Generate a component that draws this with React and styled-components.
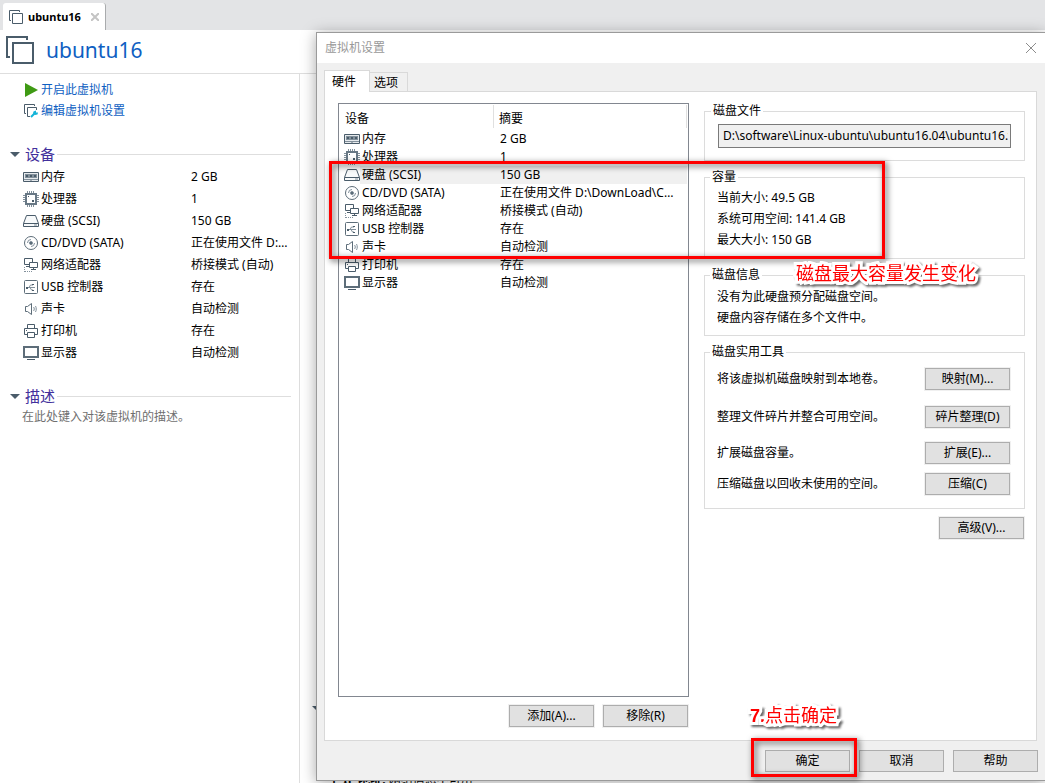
import styled, { createGlobalStyle } from "styled-components";

const GlobalStyle = createGlobalStyle`
  * {
    box-sizing: border-box;
  }
  body {
    margin: 0;
    background-color: white;
    font-family: "Noto Sans", "Noto Sans CJK SC", sans-serif;
    font-size: 12px;
    line-height: 16px;
    color: black;
  }
  button, input {
    font: inherit;
    color: inherit;
  }
`;

const Page = styled.div`
  position: relative;
  min-height: 100vh;
  display: flex;
  flex-direction: column;
  overflow: hidden;
`;

const TabBar = styled.div`
  height: 30px;
  padding: 3px 3px 0;
  display: flex;
  background-color: #e3e4e6;
`;

const VmTab = styled.div`
  padding: 0 6px;
  display: flex;
  align-items: center;
  gap: 5px;
  background-color: white;
  border-right: 1px solid #a9abad;
  border-radius: 3px 3px 0 0;
  font-weight: bold;
  font-size: 11px;
`;

const PlainButton = styled.button`
  padding: 0;
  border: 0;
  background: none;
  display: flex;
  align-items: center;
  cursor: pointer;
`;

const TabClose = styled(PlainButton)`
  margin-left: 5px;
`;

const Header = styled.header`
  height: 44px;
  padding: 0 6px 4px;
  display: flex;
  align-items: center;
  gap: 12px;
  border-bottom: 1px solid #dedede;
`;

const VmTitle = styled.h1`
  margin: 0;
  font-size: 21px;
  line-height: 28px;
  font-weight: normal;
  color: #0f5fc2;
`;

const Body = styled.div`
  flex: 1;
  display: flex;
`;

const Sidebar = styled.aside`
  width: 300px;
  padding: 5px 8px 0 10px;
  border-right: 1px solid #dedede;
`;

const Actions = styled.nav`
  padding-left: 13px;
  display: flex;
  flex-direction: column;
`;

const Action = styled.a`
  height: 21px;
  display: flex;
  align-items: center;
  gap: 2px;
  color: #0f5fc2;
  text-decoration: none;
`;

const Section = styled.section`
  margin-top: 22px;
`;

const SectionHead = styled.div`
  height: 22px;
  display: flex;
  align-items: center;
  gap: 2px;
  &::after {
    content: "";
    flex: 1;
    border-top: 1px solid #dedede;
  }
`;

const SectionTitle = styled(PlainButton)`
  gap: 5px;
  font-size: 15px;
  line-height: 22px;
  color: #42309c;
`;

const Description = styled.p`
  margin: 2px 0 0 12px;
  color: #6f6f6f;
`;

const DeviceTable = styled.table`
  width: 100%;
  table-layout: fixed;
  border-collapse: collapse;
  th, td {
    padding: 0;
    font-weight: normal;
    text-align: left;
    white-space: nowrap;
  }
`;

const SideRow = styled.tr`
  height: 22px;
  th {
    width: 181px;
  }
  && > * {
    padding-top: 1px;
  }
`;

const DeviceName = styled.span`
  padding-left: ${(props) => props.$indent}px;
  display: flex;
  align-items: center;
  gap: 2px;
`;

const Ellipsis = styled.div`
  overflow: hidden;
  text-overflow: ellipsis;
`;

const Summary = styled.main`
  flex: 1;
  padding: 0 12px;
  display: flex;
  flex-direction: column;
  justify-content: space-between;
`;

const SummaryToggle = styled(PlainButton)`
  margin-top: 632px;
`;

const IpLine = styled.p`
  margin: 0 0 -5px 16px;
`;

const Dialog = styled.div`
  position: absolute;
  top: 32px;
  right: 0;
  bottom: 2px;
  left: 316px;
  display: flex;
  flex-direction: column;
  background-color: #f0f0f0;
  border: 1px solid #9a9a9a;
  border-right: 0;
  box-shadow: 0 2px 14px rgba(0, 0, 0, 0.35);
`;

const TitleBar = styled.div`
  height: 30px;
  padding: 0 8px;
  display: flex;
  align-items: center;
  justify-content: space-between;
  background-color: white;
  color: #999;
`;

const Tabs = styled.div`
  height: 28px;
  padding: 7px 7px 0;
  display: flex;
  align-items: flex-end;
`;

const Tab = styled.button`
  height: ${(props) => (props.$active ? 22 : 19)}px;
  margin-bottom: ${(props) => (props.$active ? -1 : 0)}px;
  padding: ${(props) => (props.$active ? "0 13px 0 7px" : "2px 9px 0 4px")};
  z-index: ${(props) => (props.$active ? 1 : 0)};
  border: 1px solid #d9d9d9;
  border-bottom: 0;
  border-left-width: ${(props) => (props.$active ? 1 : 0)}px;
  background-color: ${(props) => (props.$active ? "white" : "#f0f0f0")};
`;

const Panel = styled.div`
  flex: 1;
  margin: 0 8px 0 7px;
  padding: 11px 11px 13px 13px;
  display: grid;
  grid-template-columns: 351fr 321fr;
  gap: 15px;
  background-color: white;
  border: 1px solid #d9d9d9;
`;

const ListColumn = styled.div`
  display: flex;
  flex-direction: column;
  gap: 8px;
`;

const ListBox = styled.div`
  flex: 1;
  padding-right: 1px;
  border: 1px solid #828790;
`;

const ListHead = styled.tr`
  height: 26px;
  && > th {
    padding: 3px 0 0 6px;
  }
  th:first-child {
    width: 154px;
  }
  th:last-child {
    background: linear-gradient(#e0e0e0, #e0e0e0) 0 1px / 1px 23px no-repeat,
      linear-gradient(#e0e0e0, #e0e0e0) 100% 1px / 1px 23px no-repeat;
  }
`;

const ListRow = styled.tr`
  height: 18px;
  background: ${(props) =>
    props.$selected
      ? "linear-gradient(#f0f0f0, #f0f0f0) 21px 0 no-repeat"
      : "none"};
  td:last-child {
    padding: 0 8px 0 7px;
  }
`;

const ButtonRow = styled.div`
  display: flex;
  justify-content: flex-end;
  gap: 9px;
  padding-right: 1px;
`;

const Button = styled.button`
  width: 85px;
  height: 22px;
  padding: 0;
  flex: none;
  background-color: #e1e1e1;
  border: 1px solid #adadad;
  outline: 1px solid #f0f0f0;
`;

const Settings = styled.div`
  display: flex;
  flex-direction: column;
  gap: 8px;
  min-width: 0;
`;

const Group = styled.fieldset`
  min-width: 0;
  margin: 0;
  padding: ${(props) => props.$pad};
  border: 1px solid #dcdcdc;
`;

const Legend = styled.legend`
  margin-left: -7px;
  padding: 0 2px;
`;

const PathInput = styled.input`
  width: 100%;
  height: 24px;
  padding: 0 2px 2px 4px;
  display: block;
  background-color: #f0f0f0;
  border: 1px solid #7a7a7a;
  border-radius: 0;
`;

const Line = styled.p`
  margin: 0;
  line-height: 21px;
`;

const Utility = styled.div`
  margin-top: ${(props) => props.$top}px;
  display: flex;
  align-items: center;
  justify-content: space-between;
`;

const Footer = styled.div`
  padding: 9px 7px 8px;
  display: flex;
  justify-content: flex-end;
  gap: 9px;
`;

const Marker = styled.div`
  position: absolute;
  top: ${(props) => props.$top}px;
  left: ${(props) => props.$left}px;
  width: ${(props) => props.$width}px;
  height: ${(props) => props.$height}px;
  border: 3px solid #f00;
  filter: drop-shadow(2px 2px 3px rgba(0, 0, 0, 0.7));
  pointer-events: none;
`;

const Note = styled.div`
  position: absolute;
  top: ${(props) => props.$top}px;
  left: ${(props) => props.$left}px;
  font-family: "Liberation Sans", "Noto Sans CJK SC", sans-serif;
  font-size: 18px;
  line-height: 24px;
  white-space: nowrap;
  color: #f00;
  -webkit-text-stroke: 6px white;
  paint-order: stroke fill;
  filter: drop-shadow(2px 2px 1px rgba(0, 0, 0, 0.6));
`;

const ink = "#4a5c6a";
const softInk = "#82909b";

const Icon = ({ size = 16, children, ...rest }) => (
  <svg
    width={size}
    height={size}
    viewBox={`0 0 ${size} ${size}`}
    fill="none"
    stroke={ink}
    aria-hidden="true"
    {...rest}
  >
    {children}
  </svg>
);

const icons = {
  memory: (
    <Icon>
      <path d="M.5 3.5h15v9h-15z" fill="#e6eaed" />
      <path d="M2 5h12v4H2z" fill={softInk} stroke="none" />
      <path d="M3 6h2v2H3zM7 6h2v2H7zM11 6h2v2h-2z" fill={ink} stroke="none" />
      <path d="M1 10.5h14" stroke={softInk} />
      <path d="M6 12.5h1l1-1 1 1h1" />
    </Icon>
  ),
  cpu: (
    <Icon>
      <path
        d="M4.5 0v3M6.5 0v3M8.5 0v3M10.5 0v3M4.5 13v3M6.5 13v3M8.5 13v3M10.5 13v3M0 4.5h3M0 6.5h3M0 8.5h3M0 10.5h3M13 4.5h3M13 6.5h3M13 8.5h3M13 10.5h3"
        stroke={softInk}
      />
      <rect x="3" y="3" width="10" height="10" fill="white" stroke="#687885" strokeWidth="2" />
      <path d="M5 5h1v1H5zM9 9h2v2H9z" fill={ink} stroke="none" />
    </Icon>
  ),
  disk: (
    <Icon>
      <path d="M3.5 2.5h9l3 8v3H.5v-3z" fill="#f8fafb" />
      <path d="M.5 10.5h15" />
      <path d="M11 12h3" stroke={softInk} />
    </Icon>
  ),
  cd: (
    <Icon>
      <circle cx="8" cy="8" r="6.5" stroke="#5d6d79" />
      <circle cx="8" cy="8" r="1.5" stroke={softInk} fill={ink} />
      <path d="M4.500 8A3.500 3.500 0 0 1 8 4.500M11.500 8A3.500 3.500 0 0 1 8 11.500" stroke={softInk} />
    </Icon>
  ),
  network: (
    <Icon>
      <path d="M6 7.500H1.500v-6h8v4" />
      <path d="M6.500 5.500h8v5h-8z" fill="white" />
      <path d="M10.500 11v2M8 12.500h5" />
      <path d="M1.500 10v5M2 14.500h8" strokeDasharray="1 1" stroke={softInk} />
      <path d="M3 9.500h3" />
    </Icon>
  ),
  usb: (
    <Icon>
      <rect x="1.5" y="1.5" width="13" height="13" rx="1" stroke="#5d6d79" />
      <path d="M4 8.5h8M6 8.5l1.500-2.500h2.500M7 8.500l1.500 2.500h1.500" stroke={softInk} />
      <path d="M3 8h2v2H3zM9 5h2v1H9zM9 11h2v1H9z" fill={ink} stroke="none" />
    </Icon>
  ),
  sound: (
    <Icon>
      <path d="M2.5 5.5h2l4-3v11l-4-3h-2z" stroke="#5d6d79" />
      <path d="M10.500 6c1 1 1 3 0 4M12.500 5c1 2 1 4 0 6" stroke={softInk} />
    </Icon>
  ),
  printer: (
    <Icon>
      <path d="M4.5 5.5v-4h7v4M4.5 11.5h-3v-6h13v6h-3" />
      <path d="M4.5 9.5h7v5h-7z" fill="white" />
      <path d="M3 7.5h1" />
    </Icon>
  ),
  display: (
    <Icon>
      <path d="M1 2h14v10H1z" strokeWidth="2" stroke="#5d6d79" />
      <path d="M2 3h12v8H2z" fill="white" stroke="none" />
      <path d="M4 14.5h8" />
    </Icon>
  ),
};

const Machine = ({ size, width = 1 }) => (
  <svg width={size} height={size} viewBox="0 0 28 28" fill="none" stroke={ink} strokeWidth={width} aria-hidden="true">
    <path d="M4 21H1V1h20v3" />
    <path d="M7 7h20v20H7z" />
  </svg>
);

const Caret = () => (
  <svg width="10" height="5" viewBox="0 0 10 5" aria-hidden="true">
    <path d="M0 0h10L5 5z" fill={ink} />
  </svg>
);

const devices = [
  { icon: "memory", name: "内存", value: "2 GB" },
  { icon: "cpu", name: "处理器", value: "1" },
  { icon: "disk", name: "硬盘 (SCSI)", value: "150 GB" },
  { icon: "cd", name: "CD/DVD (SATA)", value: "正在使用文件 D:\\DownLoad\\CentOS.iso" },
  { icon: "network", name: "网络适配器", value: "桥接模式 (自动)" },
  { icon: "usb", name: "USB 控制器", value: "存在" },
  { icon: "sound", name: "声卡", value: "自动检测" },
  { icon: "printer", name: "打印机", value: "存在" },
  { icon: "display", name: "显示器", value: "自动检测" },
];

const utilities = [
  { text: "将该虚拟机磁盘映射到本地卷。", button: "映射(M)...", top: 0 },
  { text: "整理文件碎片并整合可用空间。", button: "碎片整理(D)", top: 16 },
  { text: "扩展磁盘容量。", button: "扩展(E)...", top: 14 },
  { text: "压缩磁盘以回收未使用的空间。", button: "压缩(C)", top: 9 },
];

const VmSidebar = () => {
  return (
    <Sidebar>
      <Actions>
        <Action href="#start">
          <Icon>
            <path d="M2 1l13 7-13 7z" fill="#3f9a14" stroke="none" />
          </Icon>
          开启此虚拟机
        </Action>
        <Action href="#edit">
          <Icon>
            <path d="M3 10.5H1.500v-9h10V3M7 13.500H4.500v-9h9V7" />
            <path d="M8 14l4-4" stroke="#14b4d8" strokeWidth="2" />
            <path d="M10.500 8.500l2.500-1v2h2l-.500 2-2.500.500-2-1.500z" fill="#14b4d8" stroke="none" />
          </Icon>
          编辑虚拟机设置
        </Action>
      </Actions>
      <Section>
        <SectionHead>
          <SectionTitle type="button">
            <Caret />
            设备
          </SectionTitle>
        </SectionHead>
        <DeviceTable>
          <tbody>
            {devices.map((device) => (
              <SideRow key={device.name}>
                <th scope="row">
                  <DeviceName $indent={13}>
                    {icons[device.icon]}
                    {device.name}
                  </DeviceName>
                </th>
                <td>
                  <Ellipsis>{device.value}</Ellipsis>
                </td>
              </SideRow>
            ))}
          </tbody>
        </DeviceTable>
      </Section>
      <Section>
        <SectionHead>
          <SectionTitle type="button">
            <Caret />
            描述
          </SectionTitle>
        </SectionHead>
        <Description>在此处键入对该虚拟机的描述。</Description>
      </Section>
    </Sidebar>
  );
};

const DeviceList = () => {
  return (
    <ListColumn>
      <ListBox>
        <DeviceTable>
          <thead>
            <ListHead>
              <th>设备</th>
              <th>摘要</th>
            </ListHead>
          </thead>
          <tbody>
            {devices.map((device) => (
              <ListRow key={device.name} $selected={device.icon === "disk"}>
                <td>
                  <DeviceName $indent={5}>
                    {icons[device.icon]}
                    {device.name}
                  </DeviceName>
                </td>
                <td>
                  <Ellipsis>{device.value}</Ellipsis>
                </td>
              </ListRow>
            ))}
          </tbody>
        </DeviceTable>
      </ListBox>
      <ButtonRow>
        <Button>添加(A)...</Button>
        <Button>移除(R)</Button>
      </ButtonRow>
    </ListColumn>
  );
};

const DiskSettings = () => {
  return (
    <Settings>
      <Group $pad="5px 13px 12px">
        <Legend>磁盘文件</Legend>
        <PathInput
          aria-label="磁盘文件"
          readOnly
          defaultValue="D:\software\Linux-ubuntu\ubuntu16.04\ubuntu16.vmdk"
        />
      </Group>
      <Group $pad="2px 13px 8px 12px">
        <Legend>容量</Legend>
        <Line>当前大小: 49.5 GB</Line>
        <Line>系统可用空间: 141.4 GB</Line>
        <Line>最大大小: 150 GB</Line>
      </Group>
      <Group $pad="3px 13px 7px 12px">
        <Legend>磁盘信息</Legend>
        <Line>没有为此硬盘预分配磁盘空间。</Line>
        <Line>硬盘内容存储在多个文件中。</Line>
      </Group>
      <Group $pad="8px 14px 13px 12px">
        <Legend>磁盘实用工具</Legend>
        {utilities.map((item) => (
          <Utility key={item.button} $top={item.top}>
            {item.text}
            <Button>{item.button}</Button>
          </Utility>
        ))}
      </Group>
      <ButtonRow>
        <Button>高级(V)...</Button>
      </ButtonRow>
    </Settings>
  );
};

const App = () => {
  return (
    <Page>
      <GlobalStyle />
      <TabBar>
        <VmTab>
          <Machine size={14} width={2} />
          ubuntu16
          <TabClose type="button" aria-label="关闭标签">
            <svg width="8" height="8" viewBox="0 0 8 8" stroke="#c4c4c4" strokeWidth="2">
              <path d="M0 0l8 8M8 0L0 8" />
            </svg>
          </TabClose>
        </VmTab>
      </TabBar>
      <Header>
        <Machine size={28} width={2} />
        <VmTitle>ubuntu16</VmTitle>
      </Header>
      <Body>
        <VmSidebar />
        <Summary>
          <SummaryToggle type="button" aria-label="展开">
            <Caret />
          </SummaryToggle>
          <IpLine>
            <b>主 IP 地址:</b> 网络信息不可用
          </IpLine>
        </Summary>
      </Body>
      <Dialog role="dialog" aria-label="虚拟机设置">
        <TitleBar>
          虚拟机设置
          <PlainButton type="button" aria-label="关闭">
            <svg width="12" height="12" viewBox="0 0 12 12" stroke="#8c8c8c">
              <path d="M1 1l10 10M11 1L1 11" />
            </svg>
          </PlainButton>
        </TitleBar>
        <Tabs role="tablist">
          <Tab role="tab" aria-selected="true" $active>
            硬件
          </Tab>
          <Tab role="tab" aria-selected="false">
            选项
          </Tab>
        </Tabs>
        <Panel role="tabpanel">
          <DeviceList />
          <DiskSettings />
        </Panel>
        <Footer>
          <Button>确定</Button>
          <Button>取消</Button>
          <Button>帮助</Button>
        </Footer>
        <Marker $top={128} $left={12} $width={556} $height={98} />
        <Note $top={229} $left={479}>
          磁盘最大容量发生变化
        </Note>
        <Marker $top={705} $left={434} $width={106} $height={39} />
        <Note $top={671} $left={433}>
          <b>7.</b>点击确定
        </Note>
      </Dialog>
    </Page>
  );
};

export default App;
